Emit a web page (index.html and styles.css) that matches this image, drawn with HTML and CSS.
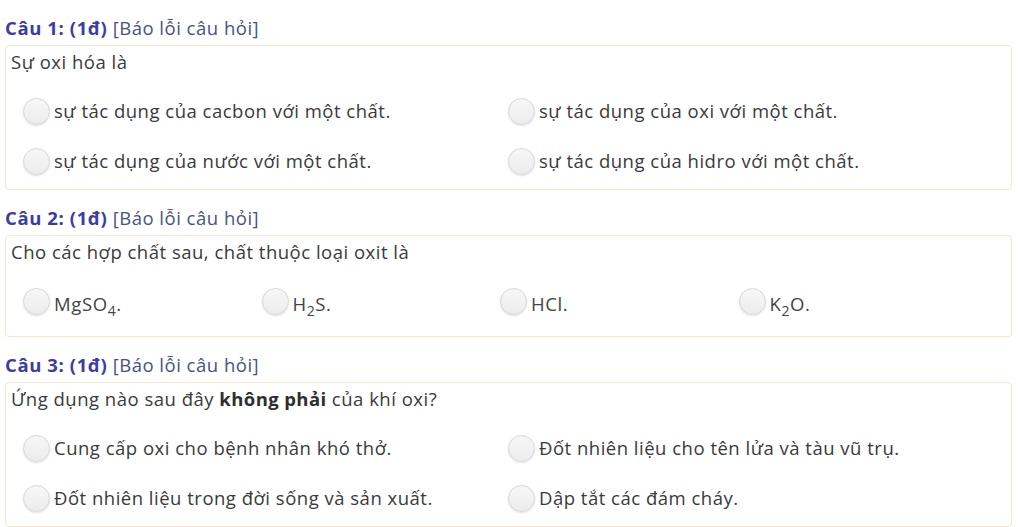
FILE: index.html
```html
<!DOCTYPE html>
<html lang="vi">
<head>
<meta charset="utf-8">
<link rel="stylesheet" href="styles.css">
</head>
<body>
<div class="page">
  <section class="question">
    <div class="q-title"><span class="q-num">Câu 1: (1đ)</span> <span class="q-report">[Báo lỗi câu hỏi]</span></div>
    <div class="q-box">
      <div class="q-text">Sự oxi hóa là</div>
      <div class="options cols-2">
        <label class="option"><span class="radio"></span><span class="opt-text">sự tác dụng của cacbon với một chất.</span></label>
        <label class="option"><span class="radio"></span><span class="opt-text">sự tác dụng của oxi với một chất.</span></label>
        <label class="option"><span class="radio"></span><span class="opt-text">sự tác dụng của nước với một chất.</span></label>
        <label class="option"><span class="radio"></span><span class="opt-text">sự tác dụng của hidro với một chất.</span></label>
      </div>
    </div>
  </section>
  <section class="question">
    <div class="q-title"><span class="q-num">Câu 2: (1đ)</span> <span class="q-report">[Báo lỗi câu hỏi]</span></div>
    <div class="q-box q-box-tall">
      <div class="q-text">Cho các hợp chất sau, chất thuộc loại oxit là</div>
      <div class="options cols-4">
        <label class="option"><span class="radio"></span><span class="opt-text formula">MgSO<sub>4</sub>.</span></label>
        <label class="option"><span class="radio"></span><span class="opt-text formula">H<sub>2</sub>S.</span></label>
        <label class="option"><span class="radio"></span><span class="opt-text formula">HCl.</span></label>
        <label class="option"><span class="radio"></span><span class="opt-text formula">K<sub>2</sub>O.</span></label>
      </div>
    </div>
  </section>
  <section class="question">
    <div class="q-title"><span class="q-num">Câu 3: (1đ)</span> <span class="q-report">[Báo lỗi câu hỏi]</span></div>
    <div class="q-box">
      <div class="q-text">Ứng dụng nào sau đây <b>không phải</b> của khí oxi?</div>
      <div class="options cols-2">
        <label class="option"><span class="radio"></span><span class="opt-text">Cung cấp oxi cho bệnh nhân khó thở.</span></label>
        <label class="option"><span class="radio"></span><span class="opt-text">Đốt nhiên liệu cho tên lửa và tàu vũ trụ.</span></label>
        <label class="option"><span class="radio"></span><span class="opt-text">Đốt nhiên liệu trong đời sống và sản xuất.</span></label>
        <label class="option"><span class="radio"></span><span class="opt-text">Dập tắt các đám cháy.</span></label>
      </div>
    </div>
  </section>
</div>
</body>
</html>
```

FILE: styles.css
```css
html, body {
  margin: 0;
  padding: 0;
  background: #ffffff;
}
body {
  font-family: "Open Sans", "Noto Sans", sans-serif;
  font-size: 18.5px;
  letter-spacing: 0.5px;
  color: #3a3a3a;
}
.page {
  padding: 0 12px 0 5px;
}
.question {
  margin-top: 16px;
}
.q-title {
  line-height: 24px;
  height: 24px;
  margin-bottom: 5px;
}
.q-num {
  font-weight: 700;
  color: #3c3ca6;
  letter-spacing: 0.6px;
}
.q-report {
  color: #4a5282;
}
.q-box {
  border: 1px solid #f1e8cf;
  border-radius: 4px;
  padding: 4px 5px 3px 5px;
}
.q-box-tall {
  padding-bottom: 10px;
}
.q-text {
  line-height: 24px;
}
.q-text b {
  font-weight: 700;
  color: #2e2e2e;
  letter-spacing: 0.4px;
}
.options {
  display: grid;
  margin-top: 12px;
  padding-left: 12px;
}
.cols-2 {
  grid-template-columns: 485px 485px;
}
.cols-4 {
  grid-template-columns: 238.5px 238.5px 238.5px 238.5px;
}
.option {
  display: flex;
  align-items: center;
  height: 50px;
}
.radio {
  width: 25px;
  height: 25px;
  border-radius: 50%;
  border: 1px solid #d6d6d6;
  background: linear-gradient(#f7f7f7, #ececec);
  box-shadow: 0 1px 2px rgba(0, 0, 0, 0.12);
  flex: none;
  margin-right: 4px;
}
.opt-text {
  line-height: 24px;
}
.formula {
  font-family: "Open Sans", "Lato", sans-serif;
  font-size: 18.5px;
  letter-spacing: 0.6px;
  color: #444;
  padding-top: 6px;
}
.formula sub {
  font-size: 14px;
  vertical-align: -5px;
  line-height: 0;
}
```
